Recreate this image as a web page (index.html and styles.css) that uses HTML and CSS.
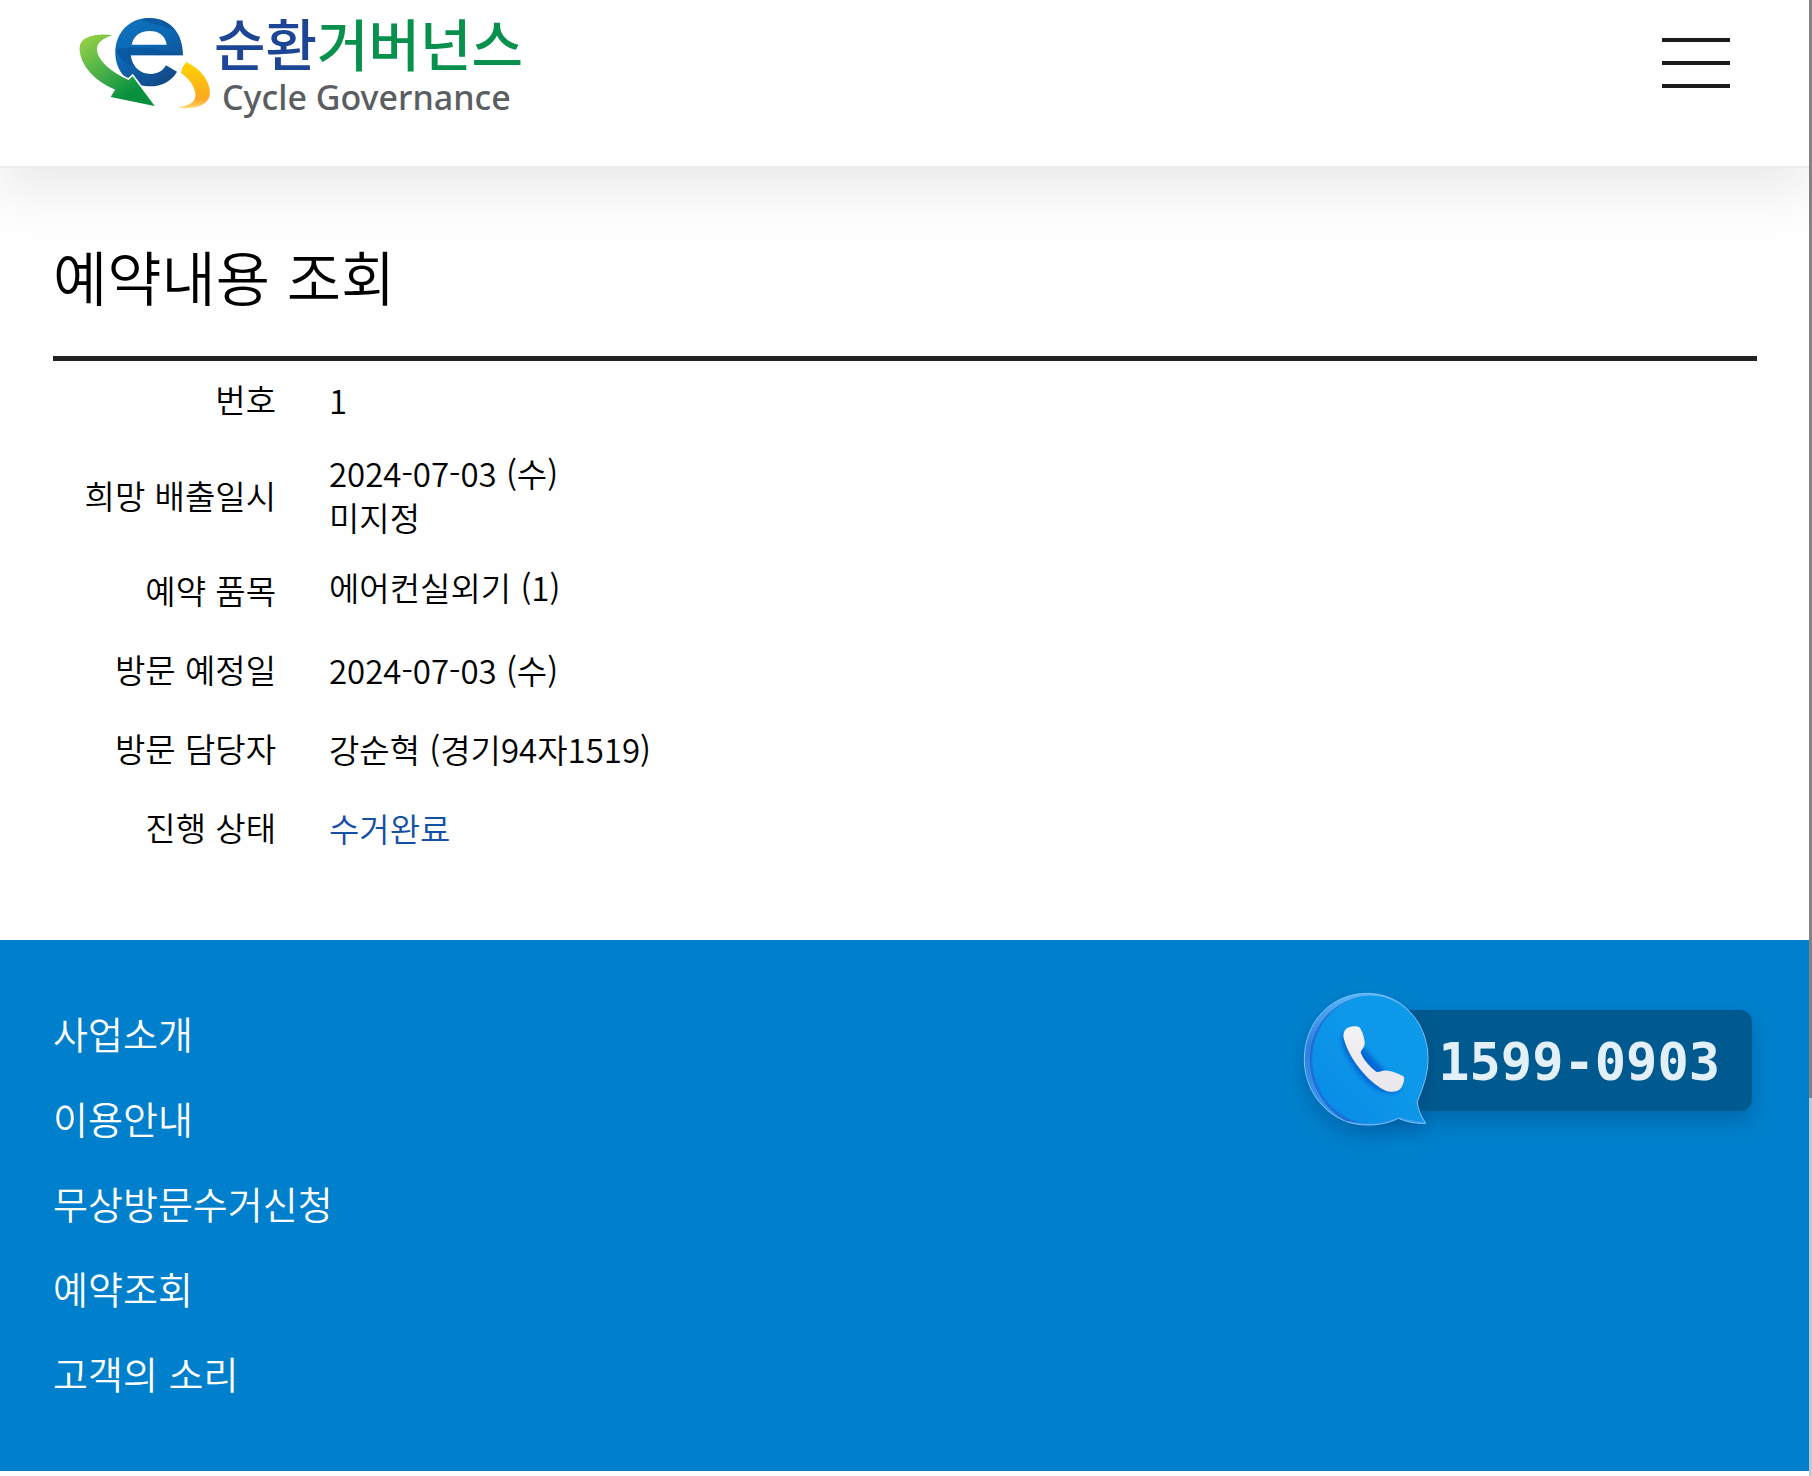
FILE: index.html
```html
<!DOCTYPE html>
<html lang="ko">
<head>
    <meta charset="UTF-8">
    <meta name="viewport" content="width=device-width, initial-scale=1.0">
    <title>예약내용 조회</title>
    <link rel="stylesheet" href="styles.css">
</head>
<body>

<div class="page">
    <header class="header">
        <a href="#" class="logo">
            <svg class="logo-mark" viewBox="50 45 411 291" aria-hidden="true">
                <defs>
                    <linearGradient id="green" x1="0" y1="0" x2="0.7" y2="1">
                        <stop offset="0.1" stop-color="#8fce46"/>
                        <stop offset="0.55" stop-color="#3fab48"/>
                        <stop offset="0.85" stop-color="#07913f"/>
                    </linearGradient>
                    <linearGradient id="blue" x1="0" y1="0" x2="0.6" y2="1">
                        <stop offset="0" stop-color="#1173bb"/>
                        <stop offset="0.5" stop-color="#0b68b5"/>
                        <stop offset="1" stop-color="#134a89"/>
                    </linearGradient>
                    <linearGradient id="yellow" x1="0" y1="0" x2="0" y2="1">
                        <stop offset="0" stop-color="#ffd400"/>
                        <stop offset="0.8" stop-color="#fca822"/>
                        <stop offset="1" stop-color="#ffd36b"/>
                    </linearGradient>
                </defs>
                <path fill="url(#blue)" fill-rule="evenodd" d="M266 54C327 54 368 96 368 166H211C215 202 243 224 274 222C295 220 309 211 317 196L350 215C331 248 296 263 254 258C202 252 165 214 165 158C165 98 207 54 266 54ZM214 134H319C315 107 297 93 267 93C239 93 220 108 214 134Z"/>
                <path fill="#0a4f98" d="M240 58C272 74 318 77 347 94C337 77 310 54 266 54C257 54 248 55 240 58ZM165 148C230 137 290 143 368 166H211C212 180 217 190 224 199C198 195 178 180 165 148Z" opacity=".6"/>
                <path fill="url(#green)" stroke="#fff" stroke-width="5" d="M167 105C105 94 53 107 55 148C58 202 106 247 161 270L147 293L289 322L217 225L204 237C158 215 112 181 112 148C112 124 137 113 167 105Z"/>
                <path fill="url(#yellow)" d="M378 186C423 207 450 245 449 281C446 316 405 329 350 322C393 318 409 302 405 279C400 254 385 235 362 219C364 206 369 196 378 186Z"/>
            </svg>
            <span class="logo-text">
                <span class="logo-name"><span class="logo-blue">순환</span>거버넌스</span>
                <span class="logo-sub">Cycle Governance</span>
            </span>
        </a>
        <button type="button" class="menu" aria-label="메뉴">
            <span></span>
            <span></span>
            <span></span>
        </button>
    </header>

    <main class="content">
        <h1>예약내용 조회</h1>
        <table class="detail">
            <tbody>
                <tr>
                    <th scope="row">번호</th>
                    <td>1</td>
                </tr>
                <tr>
                    <th scope="row">희망 배출일시</th>
                    <td>2024-07-03 (수)<br>미지정</td>
                </tr>
                <tr>
                    <th scope="row">예약 품목</th>
                    <td><div class="items">에어컨실외기 (1)</div></td>
                </tr>
                <tr>
                    <th scope="row">방문 예정일</th>
                    <td>2024-07-03 (수)</td>
                </tr>
                <tr>
                    <th scope="row">방문 담당자</th>
                    <td>강순혁 (경기94자1519)</td>
                </tr>
                <tr>
                    <th scope="row">진행 상태</th>
                    <td class="done">수거완료</td>
                </tr>
            </tbody>
        </table>
    </main>

    <footer class="footer">
        <nav class="links">
            <a href="#">사업소개</a>
            <a href="#">이용안내</a>
            <a href="#">무상방문수거신청</a>
            <a href="#">예약조회</a>
            <a href="#">고객의 소리</a>
        </nav>
        <a href="tel:1599-0903" class="call">
            <svg class="call-icon" viewBox="60 60 390 420" aria-hidden="true">
                <defs>
                    <linearGradient id="side" x1="0" y1="0" x2="0" y2="1">
                        <stop offset="0" stop-color="#58b4f5"/>
                        <stop offset="0.4" stop-color="#2f7fe0"/>
                        <stop offset="1" stop-color="#3f9cf0"/>
                    </linearGradient>
                    <linearGradient id="face" x1="1" y1="0" x2="0" y2="1">
                        <stop offset="0" stop-color="#0c9bea"/>
                        <stop offset="0.5" stop-color="#0d97e9"/>
                        <stop offset="1" stop-color="#078ae6"/>
                    </linearGradient>
                    <linearGradient id="phone" x1="0" y1="0" x2="0" y2="1">
                        <stop offset="0" stop-color="#f3f1f3"/>
                        <stop offset="1" stop-color="#e9e7ec"/>
                    </linearGradient>
                    <filter id="soft" x="-20%" y="-20%" width="150%" height="150%">
                        <feGaussianBlur stdDeviation="7"/>
                    </filter>
                </defs>
                <path fill="url(#side)" stroke="#7cc4f4" stroke-width="3" d="M262 70C365 70 444 158 444 265C444 315 429 350 412 395C414 420 425 441 437 460C405 461 380 456 355 445C325 460 290 466 260 465C155 465 73 375 73 268C73 157 153 70 262 70Z"/>
                <path fill="#1d6fd8" d="M274 77C180 77 89 155 89 270C89 345 135 420 198 453L260 462C200 440 130 400 110 300C92 190 170 90 274 77Z"/>
                <path fill="url(#face)" d="M274 77C366 77 442 158 442 265C442 315 427 350 410 394C412 420 421 440 433 457C405 455 380 449 355 442C325 457 300 461 274 461C180 461 97 375 97 270C97 160 178 77 274 77Z"/>
                <path fill="#0059cf" opacity=".75" filter="url(#soft)" d="M190 185C174 215 202 270 245 322C280 365 340 385 364 356L340 330L220 200Z"/>
                <path fill="url(#phone)" d="M208 171C219 168 231 168 237 171C243 175 252 197 254 216C256 230 246 236 242 247C246 264 272 294 290 306C302 307 307 299 322 302C340 304 359 312 370 319C376 325 370 347 360 358C350 367 330 368 314 361C262 335 207 265 192 208C187 190 194 176 208 171Z"/>
            </svg>
            <span class="call-number">1599-0903</span>
        </a>
    </footer>
</div>
<div class="scrollbar"></div>

</body>
</html>
```

FILE: styles.css
```css
* {
    box-sizing: border-box;
}

body {
    display: flex;
    min-height: 100vh;
    margin: 0;
    background-color: #fefefe;
    color: #000;
    font-family: "Noto Sans CJK KR", sans-serif;
    font-weight: 350;
}

a {
    color: inherit;
    text-decoration: none;
}

.page {
    flex: 1;
    overflow: hidden;
}

.scrollbar {
    width: 3px;
    background: linear-gradient(#828282 1098px, #c2c6ce 1098px);
}

/* header */
.header {
    display: flex;
    justify-content: space-between;
    align-items: flex-start;
    height: 168px;
    padding: 15px 79px 0 77px;
    border-bottom: 2px solid #ebebeb;
    background-color: #fff;
    box-shadow: 0 24px 48px rgba(0, 0, 0, 0.08);
}

.logo {
    display: flex;
}

.logo-mark {
    width: 137px;
    height: 97px;
}

.logo-text {
    display: flex;
    flex-direction: column;
}

.logo-name {
    color: #07914c;
    font-size: 56px;
    font-weight: 500;
    line-height: 54px;
}

.logo-blue {
    color: #1c4595;
}

.logo-sub {
    padding-left: 8px;
    color: #5a5e62;
    font-family: "Noto Sans", sans-serif;
    font-size: 34px;
    font-weight: 500;
    line-height: 56px;
}

.menu {
    display: flex;
    flex-direction: column;
    gap: 19px;
    width: 68px;
    margin-top: 23px;
    padding: 0;
    border: none;
    background: none;
    cursor: pointer;
}

.menu span {
    height: 4px;
    background-color: #1c1c1c;
}

/* reservation detail */
.content {
    padding: 68px 52px 72px 53px;
}

h1 {
    margin: 0 0 40px;
    font-size: 59px;
    font-weight: 350;
    line-height: 80px;
}

.detail {
    width: 100%;
    border-top: 5px solid #222;
    border-spacing: 0;
    font-size: 33px;
    line-height: 44px;
}

.detail th {
    width: 223px;
    padding: 16px 0 19px;
    font-weight: 350;
    text-align: right;
    white-space: nowrap;
}

.detail td {
    padding: 11px 0 13px 53px;
}

.items {
    padding-bottom: 8px;
}

.detail .done {
    color: #1450a3;
}

/* footer */
.footer {
    display: flex;
    justify-content: space-between;
    align-items: flex-start;
    padding: 50px 57px 56px 53px;
    background-color: #0080cc;
    color: #fff;
}

.links {
    display: flex;
    flex-direction: column;
    font-size: 38px;
    line-height: 85px;
}

.call {
    display: flex;
    align-items: center;
}

.call-icon {
    z-index: 1;
    width: 130px;
    height: 140px;
    filter: drop-shadow(0 10px 10px rgba(0, 50, 110, 0.3));
}

.call-number {
    margin-left: -60px;
    padding: 4px 32px 0 68px;
    border-radius: 12px;
    background-color: #005a8f;
    box-shadow: 0 10px 20px rgba(0, 50, 100, 0.3);
    color: #e4f0f8;
    font-family: "DejaVu Sans Mono", monospace;
    font-size: 52px;
    font-weight: 700;
    line-height: 97px;
}
```
